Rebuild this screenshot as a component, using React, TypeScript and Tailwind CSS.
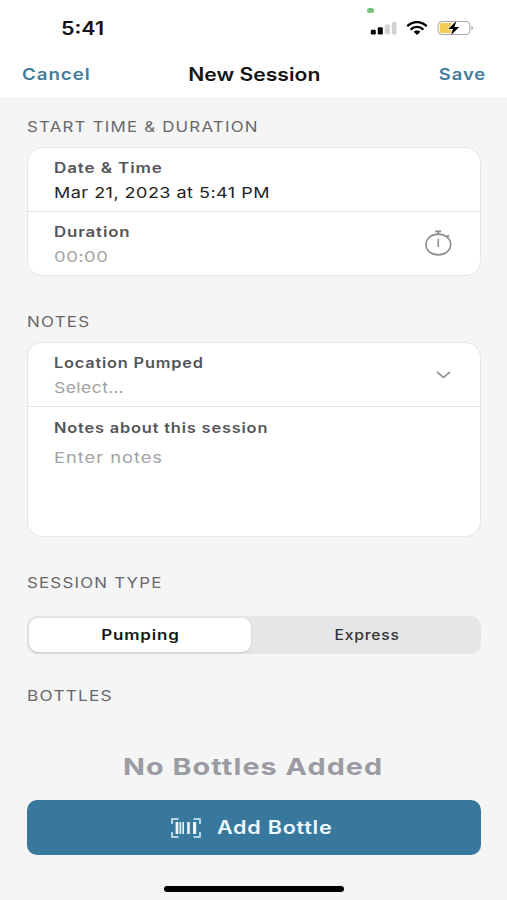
import { useState, ReactNode } from "react";
import clsx from "clsx";

interface TextProps {
  className?: string;
  children: ReactNode;
}

const Text = ({ className, children }: TextProps) => (
  <span className={clsx("block w-max whitespace-nowrap", className)}>{children}</span>
);

const SectionTitle = ({ className, children }: TextProps) => (
  <h2 className={clsx("h-5 w-max origin-left whitespace-nowrap text-[14px] leading-5 tracking-[1px] text-[#68686b]", className)}>
    {children}
  </h2>
);

const StatusBar = () => (
  <div className="relative flex h-[54px] items-center justify-between pr-[33px] pl-[61px]">
    <Text className="mt-[3px] origin-left scale-x-[1.19] text-[18px] leading-5 font-semibold text-[#111]">5:41</Text>
    <span className="absolute top-2 left-[367px] h-[5px] w-[7px] rounded-full bg-[#75c47a]" />
    <div className="mt-[2px] flex items-center">
      <svg width="27" height="14" viewBox="0 0 27 14">
        <rect x="0.8" y="8.8" width="5" height="4.8" rx="1.3" fill="#000" />
        <rect x="7.8" y="6.2" width="5" height="7.4" rx="1.3" fill="#000" />
        <rect x="14.8" y="3.5" width="5" height="10.1" rx="1.3" fill="#d3d3d3" />
        <rect x="21.8" y="0.8" width="4.7" height="12.8" rx="1.3" fill="#d3d3d3" />
      </svg>
      <svg className="ml-[9px]" width="22" height="14" viewBox="0 0 22 14" fill="none" stroke="#000" strokeWidth="2.4">
        <path d="M1.2 5.2C6.8 -0.3 15.2 -0.3 20.8 5.2" />
        <path d="M4.6 8.6C8.3 5 13.7 5 17.4 8.6" />
        <path d="M7.6 10.8C9.5 9 12.5 9 14.4 10.8L11 14Z" fill="#000" stroke="none" />
      </svg>
      <svg className="ml-[9px]" width="37" height="16" viewBox="0 0 37 16">
        <rect x="1" y="1.5" width="32" height="13" rx="4" fill="none" stroke="#a5a5a5" />
        <path d="M5 3H14V13H5Q2.7 13 2.7 10.7V5.3Q2.7 3 5 3Z" fill="#f1cb55" />
        <path d="M34.5 6Q36 6.5 36 8Q36 9.5 34.5 10Z" fill="#a5a5a5" />
        <path d="M19.5 0.8L11.3 9H16L13.8 15.2L22.2 7H17.4Z" fill="#000" stroke="#fff" strokeWidth="1.2" paintOrder="stroke" />
      </svg>
    </div>
  </div>
);

const StopwatchIcon = () => (
  <svg width="28" height="26" viewBox="0 0 28 26" fill="none" stroke="#8c8c8c" strokeWidth="1.6">
    <ellipse cx="14.3" cy="14.5" rx="12.4" ry="10.4" />
    <path d="M11.3 1.4H17.3M14.3 1.4V4M22.3 7L24.6 5.4M23.6 5L25 6.4M14.3 8.8V17" />
  </svg>
);

const BarcodeIcon = () => (
  <svg width="30" height="20" viewBox="0 0 30 20" fill="#e9f7fd">
    <path d="M1 6V1H7.5M22.5 1H29V6M29 14V19H22.5M7.5 19H1V14" fill="none" stroke="#d5edf8" strokeWidth="1.6" />
    <rect x="4.6" y="4" width="2.8" height="12" />
    <rect x="8.6" y="4" width="1.6" height="12" />
    <rect x="11.4" y="4" width="1.6" height="12" />
    <rect x="16.2" y="4" width="2.6" height="12" />
    <rect x="22" y="4" width="3.2" height="12" />
  </svg>
);

const App: React.FC = () => {
  const [sessionType, setSessionType] = useState("pumping");

  return (
    <div className="flex h-[900px] w-[507px] flex-col overflow-hidden bg-[#f5f5f5] font-['Inter',sans-serif]">
      <header className="h-[97px] shrink-0 bg-white">
        <StatusBar />
        <div className="grid h-10 grid-cols-[1fr_auto_1fr] items-center pr-[21px] pl-[22px]">
          <button className="w-max origin-left scale-x-[1.17] text-[16px] leading-5 font-semibold tracking-[0.8px] text-[#427c9b]">Cancel</button>
          <h1 className="scale-x-[1.175] pt-[2px] text-[18px] leading-5 font-semibold text-[#151515]">New Session</h1>
          <button className="w-max origin-right scale-x-[1.15] justify-self-end text-[16px] leading-5 font-semibold tracking-[0.8px] text-[#427c9b]">Save</button>
        </div>
      </header>

      <main className="flex flex-col px-[27px] pt-5">
        <SectionTitle className="scale-x-[1.205]">START TIME &amp; DURATION</SectionTitle>
        <div className="mt-[10px] h-[129px] w-[454px] rounded-[15px] border border-[#e6e6e6] bg-white">
          <div className="h-[64px] border-b border-[#e6e6e6] pt-[10px] pl-[26px]">
            <Text className="origin-left scale-x-[1.22] text-[14px] leading-5 font-semibold tracking-[0.7px] text-[#555558]">Date &amp; Time</Text>
            <Text className="mt-[5px] origin-left scale-x-[1.2] text-[15px] leading-5 tracking-[0.4px] text-[#222]">Mar 21, 2023 at 5:41 PM</Text>
          </div>
          <div className="flex items-start justify-between pt-[10px] pr-7 pl-[26px]">
            <div>
              <Text className="origin-left scale-x-[1.205] text-[14px] leading-5 font-semibold tracking-[0.7px] text-[#555558]">Duration</Text>
              <Text className="mt-[5px] origin-left scale-x-[1.23] text-[15px] leading-5 tracking-[0.4px] text-[#a2a2a5]">00:00</Text>
            </div>
            <button className="mt-2">
              <StopwatchIcon />
            </button>
          </div>
        </div>

        <SectionTitle className="mt-9 scale-x-[1.21]">NOTES</SectionTitle>
        <div className="mt-[10px] h-[195px] w-[454px] rounded-[15px] border border-[#e6e6e6] bg-white">
          <div className="flex h-16 items-start justify-between border-b border-[#e6e6e6] pt-[10px] pr-[29px] pl-[26px]">
            <div>
              <Text className="origin-left scale-x-[1.165] text-[14px] leading-5 font-semibold tracking-[0.7px] text-[#555558]">Location Pumped</Text>
              <Text className="mt-[5px] origin-left scale-x-[1.165] text-[15px] leading-5 tracking-[0.4px] text-[#a2a2a5]">Select…</Text>
            </div>
            <svg className="mt-[18px]" width="15" height="8" viewBox="0 0 15 8" fill="none" stroke="#979797" strokeWidth="1.7">
              <path d="M1 1L7.5 6.5L14 1" />
            </svg>
          </div>
          <div className="pt-[11px] pl-[26px]">
            <Text className="origin-left scale-x-[1.17] text-[14px] leading-5 font-semibold tracking-[0.7px] text-[#555558]">Notes about this session</Text>
            <Text className="mt-[10px] origin-left scale-x-[1.22] text-[15px] leading-5 tracking-[0.8px] text-[#a2a2a5]">Enter notes</Text>
          </div>
        </div>

        <SectionTitle className="mt-9 scale-x-[1.205]">SESSION TYPE</SectionTitle>
        <div className="mt-[23px] flex h-[38px] w-[454px] rounded-[10px] bg-[#e6e6e8] p-[2px]">
          <button
            onClick={() => setSessionType("pumping")}
            className={clsx("flex w-[222px] items-center justify-center rounded-[9px]", sessionType === "pumping" && "bg-white shadow-sm")}
          >
            <Text className="scale-x-[1.21] text-[14px] leading-5 font-semibold tracking-[0.7px] text-[#151515]">Pumping</Text>
          </button>
          <button
            onClick={() => setSessionType("express")}
            className={clsx("flex flex-1 items-center justify-center rounded-[9px] pl-1", sessionType === "express" && "bg-white shadow-sm")}
          >
            <Text className="scale-x-[1.12] text-[14px] leading-5 font-medium tracking-[0.7px] text-[#333]">Express</Text>
          </button>
        </div>

        <SectionTitle className="mt-8 scale-x-[1.23]">BOTTLES</SectionTitle>
        <p className="mt-[46px] w-max origin-center scale-x-[1.25] self-center text-[23px] leading-[30px] font-bold tracking-[0.85px] text-[#9b9ba3]">No Bottles Added</p>
        <button className="mt-[18px] flex h-[55px] w-[454px] items-center justify-center gap-4 rounded-[10px] bg-[#38789d] pr-[23px]">
          <BarcodeIcon />
          <Text className="origin-left scale-x-[1.2] text-[18px] leading-6 font-semibold tracking-[0.6px] text-[#edf9fe]">Add Bottle</Text>
        </button>
      </main>
      <div className="mt-[31px] h-[6px] w-[180px] shrink-0 self-center rounded-full bg-black" />
    </div>
  );
};

export default App;
